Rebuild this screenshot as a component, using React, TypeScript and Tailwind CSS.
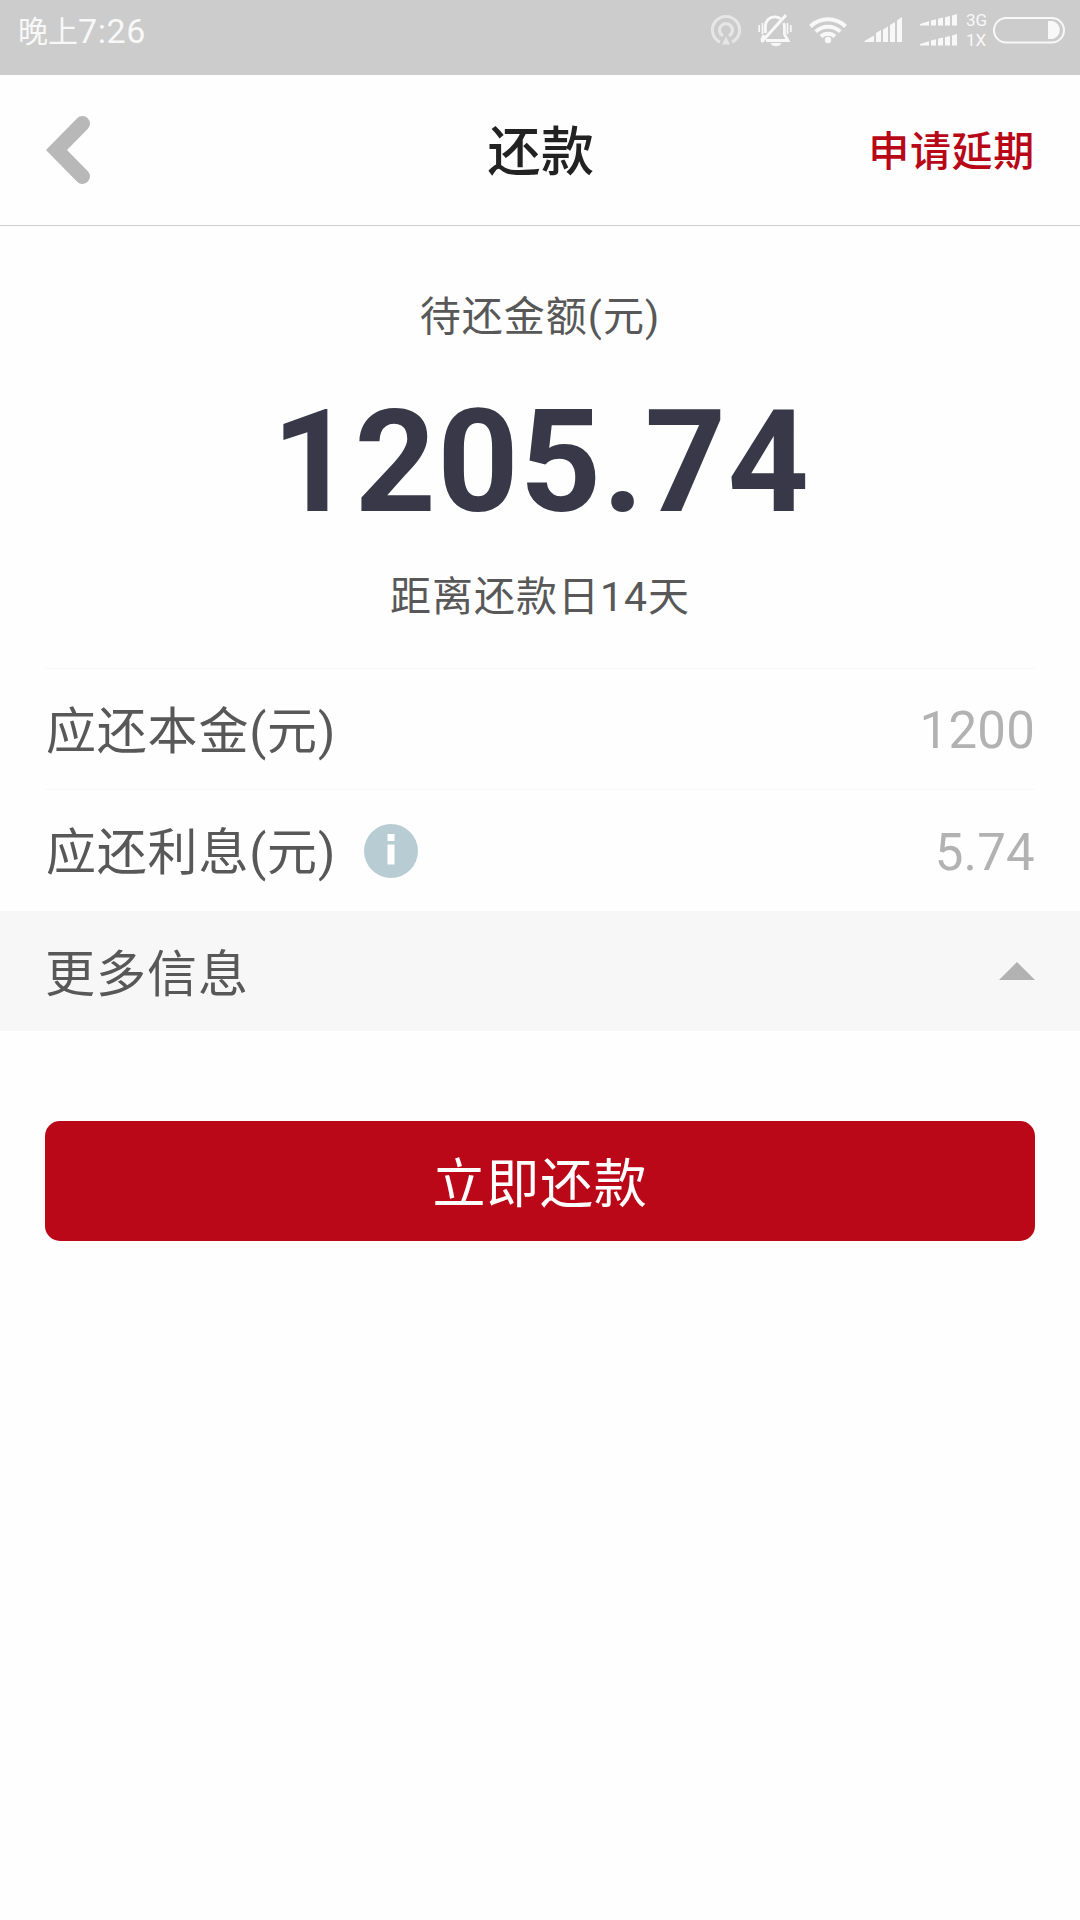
import type { ReactNode } from 'react'

function HotspotIcon() {
  return (
    <svg className="h-[32px] w-[32px] opacity-60" viewBox="710 14 32 32" fill="none" stroke="#f8f8f8" strokeWidth="3">
      <path d="M720 42.200a13.600 13.600 0 1 1 12 0" />
      <path d="M723 35.800a6.500 6.500 0 1 1 6 0" strokeWidth="3.200" />
      <path d="M726 36.500l4 8h-8z" fill="#f8f8f8" stroke="none" />
    </svg>
  )
}

function BellOffIcon() {
  return (
    <svg className="h-[34px] w-[36px]" viewBox="757 12 36 34" fill="none" stroke="#f8f8f8" strokeWidth="2.8">
      <path d="M780.5 17.8c-1.5-1.300-3.300-2-5.500-2-5.600 0-9.600 4-9.600 9.600v6.500" />
      <path d="M783.700 22c.5 1.100.7 2.300.7 3.600v7.600l3.600 6.300h-22" />
      <path d="M764.200 34l-2.700 5" />
      <path d="M761.500 41L786 14" strokeWidth="3" />
      <path d="M770.500 42h11c-1 2.200-3 3.200-5.500 3.200s-4.500-1-5.500-3.200z" fill="#f8f8f8" stroke="none" />
      <path d="M762.500 22v11M759.200 24v7M787.500 22v11M790.800 24v7" strokeWidth="1.700" />
    </svg>
  )
}

function WifiIcon() {
  return (
    <svg className="h-[30px] w-[40px]" viewBox="808 15 40 30" fill="none" stroke="#f8f8f8" strokeWidth="4">
      <path d="M810.500 26.500a25 25 0 0 1 35 0" />
      <path d="M815.700 31.700a17.500 17.500 0 0 1 24.600 0" />
      <path d="M821 36.500a10 10 0 0 1 14 0" />
      <circle cx="828" cy="40" r="3.200" fill="#f8f8f8" stroke="none" />
    </svg>
  )
}

function SignalIcon() {
  return (
    <svg className="h-[26px] w-[38px]" viewBox="864 18 38 26" fill="#f8f8f8">
      <path d="M864.500 43v-1l9.500-5.500V43zM876 43v-9l5-3V43zM883 43V30.500l5-3V43zM890 43V26l5-3V43zM897 43V21.500l5-3.500v25z" />
    </svg>
  )
}

function SmallSignalIcon() {
  return (
    <svg className="h-[12px] w-[38px]" viewBox="0 0 38 12" fill="#f8f8f8">
      <path d="M0 11.500v-1.500l9-2.800v4.300zM11 11.500V6.500l5-1.300v6.300zM18 11.500V4.700l5-1.300v8.100zM25 11.500V3.200l5-1.200v9.500zM32 11.500V1.500l5-1.500v11.500z" />
    </svg>
  )
}

function BatteryIcon() {
  return (
    <svg className="h-[28px] w-[74px]" viewBox="992 16 74 28" fill="none">
      <rect x="994" y="18" width="70" height="24.500" rx="12.250" stroke="#f8f8f8" strokeWidth="2" />
      <path d="M1048 21h4.500a9.200 9.200 0 0 1 0 18h-4.500z" fill="#f8f8f8" />
    </svg>
  )
}

function StatusBar() {
  return (
    <div className="flex h-[75px] items-start justify-between bg-[#cccccc] pl-[18px] pr-[14px] text-[#f8f8f8]">
      <div className="flex h-[62px] items-center text-[34px] tracking-[0.6px]">
        <span className="text-[30px] tracking-normal">晚上</span>
        <span className="pt-px">7:26</span>
      </div>
      <div className="flex h-[60px] items-center">
        <HotspotIcon />
        <div className="w-[15px]" />
        <BellOffIcon />
        <div className="w-[15px]" />
        <WifiIcon />
        <div className="w-[16px]" />
        <SignalIcon />
        <div className="w-[18px]" />
        <div className="flex flex-col gap-[8px]">
          <SmallSignalIcon />
          <SmallSignalIcon />
        </div>
        <div className="ml-[8px] flex w-[26px] flex-col text-[17px] leading-[20px]">
          <span>3G</span>
          <span>1X</span>
        </div>
        <BatteryIcon />
      </div>
    </div>
  )
}

function NavBar() {
  return (
    <header className="grid h-[151px] grid-cols-3 items-center border-b border-[#d0d0d0] px-[45px]">
      <button type="button" aria-label="返回">
        <svg className="h-[70px] w-[46px]" viewBox="45 115 46 70" fill="none">
          <path d="M82.500 123.500L56.500 150l26 26.500" stroke="#b8b8b8" strokeWidth="15" strokeLinecap="round" />
        </svg>
      </button>
      <h1 className="pt-[6px] pl-[2px] text-center text-[53px] leading-[76px] font-medium tracking-[0.5px] text-[#222222]">
        还款
      </h1>
      <button
        type="button"
        className="pt-[4px] text-right text-[41px] leading-[60px] font-medium tracking-[0.7px] text-[#b80818]"
      >
        申请延期
      </button>
    </header>
  )
}

function Row({ label, value, info }: { label: string; value: ReactNode; info?: boolean }) {
  return (
    <div className="mx-[45px] flex h-full items-center justify-between border-t border-[#f7f7f7]">
      <div className="flex items-center text-[50px] tracking-[0.8px] text-[#585858]">
        <span className="pt-[6px] pl-[1px]">{label}</span>
        {info && (
          <svg className="ml-[28px] h-[54px] w-[54px]" viewBox="0 0 54 54">
            <circle cx="27" cy="27" r="27" fill="#b8ccd4" />
            <path d="M23.500 10h7v7h-7zM23.500 20.500h7v20h-7z" fill="#fff" />
          </svg>
        )}
      </div>
      <span className="pt-[5px] text-[51px] tracking-[0.2px] text-[#b2b2b2]">{value}</span>
    </div>
  )
}

export default function App() {
  return (
    <div className="min-h-[1920px] w-[1080px] bg-[#fefefe] font-[Roboto,'Noto_Sans_CJK_SC',sans-serif]">
      <StatusBar />
      <NavBar />

      <section className="flex h-[442px] flex-col items-center">
        <p className="mt-[61px] text-[41px] leading-[60px] tracking-[1px] text-[#585858]">待还金额(元)</p>
        <p className="mt-[31px] pl-[2px] text-[142px] leading-[170px] font-bold tracking-[1.200px] text-[#383848]">
          1205.74
        </p>
        <p className="mt-[19px] text-[41px] leading-[60px] tracking-[1px] text-[#585858]">距离还款日14天</p>
      </section>

      <div className="grid h-[243px] grid-rows-[121px_122px]">
        <Row label="应还本金(元)" value="1200" />
        <Row label="应还利息(元)" value="5.74" info />
      </div>

      <div className="flex h-[120px] items-center justify-between bg-[#f7f7f7] px-[45px]">
        <span className="pt-[8px] text-[50px] tracking-[1px] text-[#585858]">更多信息</span>
        <svg className="h-[18px] w-[36px]" viewBox="0 0 36 18">
          <path d="M18 0l18 18H0z" fill="#b2b2b2" />
        </svg>
      </div>

      <div className="px-[45px] pt-[90px]">
        <button
          type="button"
          className="h-[120px] w-full rounded-[15px] bg-[#ba0819] pt-[10px] text-[53px] tracking-[0.800px] text-white"
        >
          立即还款
        </button>
      </div>
    </div>
  )
}
